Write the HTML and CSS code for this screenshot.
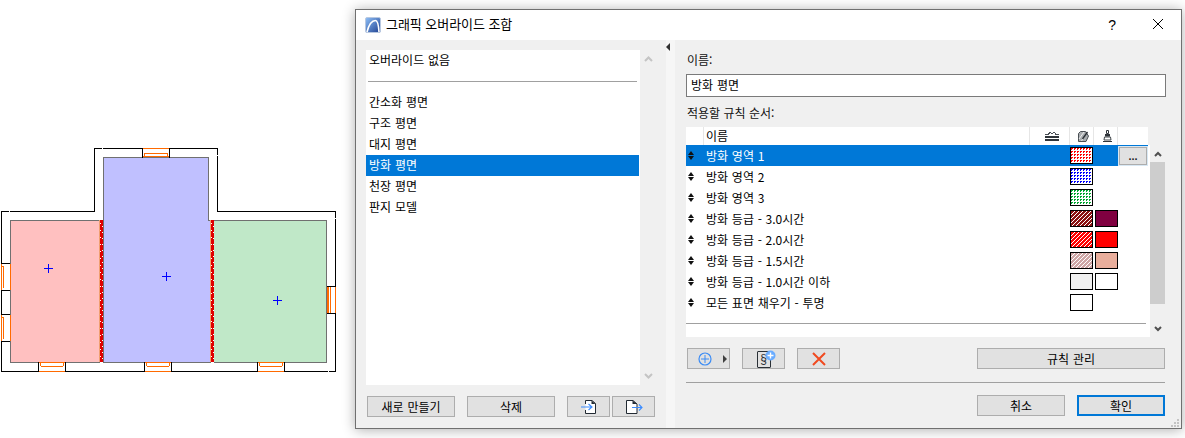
FILE: index.html
```html
<!DOCTYPE html>
<html lang="ko">
<head>
<meta charset="utf-8">
<title>그래픽 오버라이드 조합</title>
<link rel="stylesheet" href="styles.css">
</head>
<body>
<div class="page">
  <svg class="plan" width="355" height="438" viewBox="0 0 355 438" shape-rendering="crispEdges">
    <defs>
      <g id="winH">
        <path d="M0.5 0V10M27.5 0V10" stroke="#000" fill="none"/>
        <rect x="1" y="0" width="26" height="1" fill="#ff6a00"/>
        <rect x="1" y="8" width="26" height="1" fill="#ff6a00"/>
        <rect x="3" y="5" width="22" height="1" fill="#ff6a00"/>
        <rect x="2" y="5" width="1" height="3" fill="#ff6a00"/>
        <rect x="25" y="5" width="1" height="3" fill="#ff6a00"/>
      </g>
      <g id="winHb">
        <path d="M0.5 0V10M27.5 0V10" stroke="#000" fill="none"/>
        <rect x="1" y="0" width="26" height="1" fill="#ff6a00"/>
        <rect x="1" y="9" width="26" height="1" fill="#ff6a00"/>
        <rect x="3" y="4" width="22" height="1" fill="#ff6a00"/>
        <rect x="2" y="1" width="1" height="3" fill="#ff6a00"/>
        <rect x="25" y="1" width="1" height="3" fill="#ff6a00"/>
      </g>
      <g id="winV">
        <path d="M1 0.5H10M1 27.5H10" stroke="#000" fill="none"/>
        <rect x="1" y="1" width="1" height="26" fill="#ff6a00"/>
        <rect x="3" y="3" width="1" height="22" fill="#ff6a00"/>
        <rect x="1" y="3" width="2" height="1" fill="#ff6a00"/>
        <rect x="10" y="1" width="1" height="26" fill="#ff6a00"/>
      </g>
    </defs>
    <rect x="10" y="220" width="90" height="142" fill="#ffc0c0"/>
    <path d="M103.5 157.5H208.5V220.5H210V362.5H103.5Z" fill="#c0c0ff" stroke="#707070"/>
    <rect x="213" y="220" width="114" height="142" fill="#c0e8c8"/>
    <path d="M99.5 220.5H10.5V362.5H99.5" fill="none" stroke="#707070"/>
    <path d="M213.5 220.5H326.5V362.5H213.5" fill="none" stroke="#707070"/>
    <rect x="99" y="220" width="1" height="142" fill="#f0a070"/>
    <rect x="100" y="220" width="3" height="142" fill="#e00000"/>
    <path d="M100.5 223V362" stroke="#fff" stroke-dasharray="1 6" fill="none"/>
    <path d="M102.5 226V362" stroke="#fff" stroke-dasharray="1 5" fill="none"/>
    <rect x="210" y="220" width="1" height="142" fill="#f0a070"/>
    <rect x="211" y="220" width="3" height="142" fill="#e00000"/>
    <path d="M211.5 223V362" stroke="#fff" stroke-dasharray="1 6" fill="none"/>
    <path d="M213.5 226V362" stroke="#fff" stroke-dasharray="1 5" fill="none"/>
    <path d="M1.5 371.5V211.5H94.5V148.5H143M169 148.5H217.5V211.5H335.5V371.5H1.5" fill="none" stroke="#000"/>
    <path d="M9.5 211V212.5M102.5 148V149.5M217 155.5H218.5M335 218.5H336.5M328 371V372.5" stroke="#fff" fill="none"/>
    <use href="#winH" x="142" y="148"/>
    <use href="#winHb" x="38" y="362"/>
    <use href="#winHb" x="144" y="362"/>
    <use href="#winHb" x="257" y="362"/>
    <use href="#winV" x="0" y="263"/>
    <use href="#winV" x="0" y="314"/>
    <path d="M327 287H329V313H327ZM330 287H331V313H330ZM335 287H336V313H335Z" fill="#ff6a00"/>
    <path d="M327 286.5H336M327 313.5H336" stroke="#000" fill="none"/>
    <path d="M43.5 268.5H52.5M48 264V273M162 276.5H171M166.5 272V281M272.5 300.5H281.5M277.5 296V305" stroke="#0000ff" fill="none"/>
  </svg>

  <div class="window">
    <header class="titlebar">
      <svg class="app-icon" width="16" height="16" viewBox="0 0 16 16">
        <defs>
          <linearGradient id="appGrad" x1="0" y1="0" x2="1" y2="1">
            <stop offset="0" stop-color="#8fc0f8"/>
            <stop offset="1" stop-color="#1d3f8f"/>
          </linearGradient>
        </defs>
        <rect x="0.5" y="0.5" width="15" height="15" rx="1.5" fill="url(#appGrad)" stroke="#b8c8e0"/>
        <path d="M2 15C4 7 7 3.5 10.5 3.5C12.5 3.5 13.5 7 14 15" fill="none" stroke="#fff" stroke-width="1.6"/>
      </svg>
      <span class="title-text">그래픽 오버라이드 조합</span>
      <span class="help">?</span>
      <svg class="close" width="10" height="10" viewBox="0 0 10 10">
        <path d="M0 0L10 10M10 0L0 10" stroke="#000" fill="none"/>
      </svg>
    </header>

    <div class="content">
      <section class="left-pane">
        <div class="list-wrap">
          <div class="list">
            <div class="list-row">오버라이드 없음</div>
            <div class="list-sep"></div>
            <div class="list-row">간소화 평면</div>
            <div class="list-row">구조 평면</div>
            <div class="list-row">대지 평면</div>
            <div class="list-row selected">방화 평면</div>
            <div class="list-row">천장 평면</div>
            <div class="list-row">판지 모델</div>
          </div>
          <div class="list-scroll">
            <svg width="9" height="6" viewBox="0 0 9 6"><path d="M1 5L4.5 1.5L8 5" fill="none" stroke="#c4c4c4" stroke-width="2"/></svg>
            <svg width="9" height="6" viewBox="0 0 9 6"><path d="M1 1L4.5 4.5L8 1" fill="none" stroke="#c4c4c4" stroke-width="2"/></svg>
          </div>
        </div>
        <div class="left-buttons">
          <button class="btn btn-wide">새로 만들기</button>
          <button class="btn btn-wide btn-gap">삭제</button>
          <button class="btn btn-icon btn-gap">
            <svg width="18" height="16" viewBox="0 0 18 16">
              <path d="M5.5 5V1.5H12L15.5 4.5V14.5H5.5V11" fill="#fff" stroke="#222a33" stroke-width="1"/>
              <path d="M11.5 1.5V5H15.5" fill="#222a33"/>
              <path d="M1 8H12M8.5 5L12 8L8.5 11" fill="none" stroke="#3b8cff" stroke-width="1.1"/>
            </svg>
          </button>
          <button class="btn btn-icon">
            <svg width="18" height="16" viewBox="0 0 18 16">
              <path d="M1.5 1.5H8L12 5V14.5H1.5Z" fill="#fff" stroke="#222a33" stroke-width="1"/>
              <path d="M7.5 1.5V5H12" fill="#222a33"/>
              <path d="M7 8.5H17M14 5.5L17 8.5L14 11.5" fill="none" stroke="#3b8cff" stroke-width="1.1"/>
            </svg>
          </button>
        </div>
      </section>

      <div class="splitter"><span class="splitter-arrow"></span></div>

      <section class="right-pane">
        <div class="label label-name">이름:</div>
        <div class="name-input">방화 평면</div>
        <div class="label label-rules">적용할 규칙 순서:</div>

        <div class="table-wrap">
          <div class="table">
            <div class="thead">
              <span class="th"></span>
              <span class="th th-name">이름</span>
              <span class="th th-icon th-layer">
                <svg width="14" height="10" viewBox="0 0 14 10" shape-rendering="crispEdges">
                  <path d="M0 3.5H3L5 1.5L7 3L9 1L11 3.5H14" fill="none" stroke="#4a4f55"/>
                  <rect x="0" y="5" width="14" height="2" fill="#30353a"/>
                  <rect x="0" y="8" width="14" height="2" fill="#30353a"/>
                </svg>
              </span>
              <span class="th th-icon th-shift">
                <svg width="11" height="11" viewBox="0 0 11 11">
                  <path d="M0.5 2.5L2.5 0.5H7.5L10.5 5L8 10.5H0.5Z" fill="#a9adb0" stroke="#4a4f54"/>
                  <path d="M1 8L6 1M3.5 10L7.5 4" stroke="#eee" fill="none"/>
                  <path d="M9.5 1L4.5 8" stroke="#2a2f34" stroke-width="1.4" fill="none"/>
                </svg>
              </span>
              <span class="th th-icon th-shift">
                <svg width="9" height="12" viewBox="0 0 9 12">
                  <path d="M3.5 0.5H5.5V3.5H3.5Z" fill="#fff" stroke="#30353a"/>
                  <path d="M2 4H7V6.5H2Z" fill="#30353a"/>
                  <path d="M1.5 7H7.5L8 10H1Z" fill="#fff" stroke="#30353a" stroke-width="0.9"/>
                  <path d="M0 11.5H9" stroke="#30353a" stroke-width="1"/>
                </svg>
              </span>
              <span class="th"></span>
            </div>
            <div class="tr selected">
              <span class="handle"></span><span class="td-name">방화 영역 1</span><span></span>
              <span class="swatch">
                <svg class="fill-art" width="21" height="15" shape-rendering="crispEdges">
                  <pattern id="dotRed" width="3" height="3" patternUnits="userSpaceOnUse">
                    <rect width="3" height="3" fill="#fff"/>
                    <path d="M0 0h2v1h-1v1h-1z" fill="#ff0000"/>
                  </pattern>
                  <rect width="21" height="15" fill="url(#dotRed)"/>
                </svg>
              </span><span></span>
              <button class="more-btn">...</button>
            </div>
            <div class="tr">
              <span class="handle"></span><span class="td-name">방화 영역 2</span><span></span>
              <span class="swatch">
                <svg class="fill-art" width="21" height="15" shape-rendering="crispEdges">
                  <pattern id="dotBlue" width="3" height="3" patternUnits="userSpaceOnUse">
                    <rect width="3" height="3" fill="#fff"/>
                    <path d="M0 0h2v1h-1v1h-1z" fill="#0000ff"/>
                  </pattern>
                  <rect width="21" height="15" fill="url(#dotBlue)"/>
                </svg>
              </span><span></span><span></span>
            </div>
            <div class="tr">
              <span class="handle"></span><span class="td-name">방화 영역 3</span><span></span>
              <span class="swatch">
                <svg class="fill-art" width="21" height="15" shape-rendering="crispEdges">
                  <pattern id="dotGreen" width="3" height="3" patternUnits="userSpaceOnUse">
                    <rect width="3" height="3" fill="#fff"/>
                    <path d="M0 0h2v1h-1v1h-1z" fill="#00a830"/>
                  </pattern>
                  <rect width="21" height="15" fill="url(#dotGreen)"/>
                </svg>
              </span><span></span><span></span>
            </div>
            <div class="tr">
              <span class="handle"></span><span class="td-name">방화 등급 - 3.0시간</span><span></span>
              <span class="swatch">
                <svg class="fill-art" width="21" height="15" shape-rendering="crispEdges">
                  <pattern id="hatchDark" width="4" height="4" patternUnits="userSpaceOnUse">
                    <rect width="4" height="4" fill="#8a1212"/>
                    <path d="M3 0h1v1h-1zM2 1h1v1h-1zM1 2h1v1h-1zM0 3h1v1h-1z" fill="#fff"/>
                  </pattern>
                  <rect width="21" height="15" fill="url(#hatchDark)"/>
                </svg>
              </span><span class="swatch swatch-b solid-wine"></span><span></span>
            </div>
            <div class="tr">
              <span class="handle"></span><span class="td-name">방화 등급 - 2.0시간</span><span></span>
              <span class="swatch">
                <svg class="fill-art" width="21" height="15" shape-rendering="crispEdges">
                  <pattern id="hatchRed" width="4" height="4" patternUnits="userSpaceOnUse">
                    <rect width="4" height="4" fill="#ff0000"/>
                    <path d="M3 0h1v1h-1zM2 1h1v1h-1zM1 2h1v1h-1zM0 3h1v1h-1z" fill="#fff"/>
                  </pattern>
                  <rect width="21" height="15" fill="url(#hatchRed)"/>
                </svg>
              </span><span class="swatch swatch-b solid-red"></span><span></span>
            </div>
            <div class="tr">
              <span class="handle"></span><span class="td-name">방화 등급 - 1.5시간</span><span></span>
              <span class="swatch">
                <svg class="fill-art" width="21" height="15" shape-rendering="crispEdges">
                  <pattern id="hatchPink" width="4" height="4" patternUnits="userSpaceOnUse">
                    <rect width="4" height="4" fill="#cfa6a6"/>
                    <path d="M3 0h1v1h-1zM2 1h1v1h-1zM1 2h1v1h-1zM0 3h1v1h-1z" fill="#fff"/>
                  </pattern>
                  <rect width="21" height="15" fill="url(#hatchPink)"/>
                </svg>
              </span><span class="swatch swatch-b solid-salmon"></span><span></span>
            </div>
            <div class="tr">
              <span class="handle"></span><span class="td-name">방화 등급 - 1.0시간 이하</span><span></span>
              <span class="swatch solid-light"></span><span class="swatch swatch-b solid-white"></span><span></span>
            </div>
            <div class="tr">
              <span class="handle"></span><span class="td-name">모든 표면 채우기 - 투명</span><span></span>
              <span class="swatch solid-white"></span><span></span><span></span>
            </div>
            <div class="table-sep"></div>
          </div>
          <div class="vscroll">
            <div class="vscroll-top">
              <svg width="8" height="6" viewBox="0 0 8 6"><path d="M1 5L4 2L7 5" fill="none" stroke="#505050" stroke-width="2"/></svg>
            </div>
            <div class="vscroll-thumb"></div>
            <div class="vscroll-bottom">
              <svg width="8" height="6" viewBox="0 0 8 6"><path d="M1 1L4 4L7 1" fill="none" stroke="#505050" stroke-width="2"/></svg>
            </div>
          </div>
        </div>

        <div class="action-row">
          <button class="btn btn-icon btn-plus">
            <svg width="14" height="14" viewBox="0 0 14 14">
              <circle cx="7" cy="7" r="6" fill="none" stroke="#3b8cf5" stroke-width="1.2"/>
              <path d="M7 3V11M3 7H11" stroke="#3b8cf5" fill="none"/>
            </svg>
            <span class="tri-right"></span>
          </button>
          <button class="btn btn-icon btn-gap-s">
            <span class="doc-icon">§
              <svg class="doc-plus" width="11" height="11" viewBox="0 0 11 11">
                <circle cx="5.5" cy="5.5" r="5" fill="#6aacff"/>
                <path d="M5.5 2.5V8.5M2.5 5.5H8.5" stroke="#fff" stroke-width="1.4" fill="none"/>
              </svg>
            </span>
          </button>
          <button class="btn btn-icon btn-gap-s">
            <svg width="14" height="14" viewBox="0 0 14 14">
              <path d="M1 1L13 13M13 1L1 13" stroke="#f04a20" stroke-width="2" fill="none"/>
            </svg>
          </button>
          <button class="btn btn-manage">규칙 관리</button>
        </div>

        <div class="pane-sep"></div>

        <div class="footer-row">
          <button class="btn btn-wide">취소</button>
          <button class="btn btn-wide btn-primary">확인</button>
        </div>
      </section>
    </div>

    <svg class="grip" width="8" height="8" viewBox="0 0 8 8" shape-rendering="crispEdges">
      <path d="M6 0h2v2h-2zM3 3h2v2h-2zM6 3h2v2h-2zM0 6h2v2h-2zM3 6h2v2h-2zM6 6h2v2h-2z" fill="#c4c4c4"/>
    </svg>
  </div>
</div>
</body>
</html>
```

FILE: styles.css
```css
* { box-sizing: border-box; }

html, body {
  margin: 0;
  padding: 0;
  background: #fff;
}

body {
  font-family: "Noto Sans CJK KR", "Noto Sans", sans-serif;
  font-size: 12px;
  color: #000;
  overflow: hidden;
}

.page {
  display: flex;
  align-items: flex-start;
  width: 1185px;
  height: 438px;
  overflow: hidden;
}

.plan {
  display: block;
  flex: none;
}

/* dialog window */
.window {
  position: relative;
  flex: none;
  display: flex;
  flex-direction: column;
  width: 827px;
  height: 420px;
  margin-top: 9px;
  border: 1px solid #707070;
  background: #f0f0f0;
  box-shadow: 0 1px 12px rgba(0, 0, 0, 0.32);
}

.titlebar {
  flex: none;
  display: flex;
  align-items: center;
  height: 30px;
  padding-left: 9px;
  background: #fff;
}

.app-icon { flex: none; }

.title-text {
  margin-left: 5px;
  margin-bottom: 2px;
  font-size: 13px;
  line-height: 18px;
  letter-spacing: -0.05px;
}

.help {
  margin-left: auto;
  margin-bottom: 1px;
  font-size: 14px;
  font-family: "Liberation Sans", sans-serif;
}

.close {
  margin-left: 37px;
  margin-right: 18px;
  margin-bottom: 2px;
}

.content {
  flex: 1;
  display: flex;
  min-height: 0;
}

/* left pane */
.left-pane {
  flex: none;
  width: 310px;
  padding: 10px 0 0 10px;
}

.list-wrap {
  display: flex;
  height: 335px;
}

.list {
  width: 274px;
  background: #fff;
}

.list-row {
  height: 21px;
  padding-left: 3px;
  line-height: 20px;
  white-space: nowrap;
  word-spacing: 0.5px;
}

.list-row.selected {
  width: 273px;
  background: #0078d7;
  color: #fff;
}

.list-sep {
  height: 1px;
  margin: 10px 3px 10px 2px;
  background: #a0a0a0;
}

.list-scroll {
  display: flex;
  flex-direction: column;
  justify-content: space-between;
  align-items: center;
  width: 16px;
  padding: 6px 0 6px 0;
}

.list-scroll svg { display: block; }

.left-buttons {
  display: flex;
  margin-top: 11px;
  padding-left: 1px;
}

/* buttons */
.btn {
  display: inline-flex;
  align-items: center;
  justify-content: center;
  height: 21px;
  margin: 0;
  padding: 0;
  border: 1px solid #adadad;
  background: #e1e1e1;
  color: #000;
  font: inherit;
  line-height: 18px;
  word-spacing: 0.5px;
}

.btn-wide { width: 88px; }
.btn-gap { margin-left: 12px; }
.btn-icon { width: 43px; }
.left-buttons .btn-icon + .btn-icon { margin-left: 2px; }
.btn-gap-s { margin-left: 12px; }

.btn-primary {
  margin-left: 12px;
  border: 2px solid #0078d7;
}

.btn-plus {
  justify-content: flex-start;
  padding-left: 10px;
}

.tri-right {
  width: 0;
  height: 0;
  margin-left: 11px;
  border-left: 4px solid #404040;
  border-top: 4px solid transparent;
  border-bottom: 4px solid transparent;
}

.doc-icon {
  position: relative;
  display: block;
  width: 14px;
  height: 17px;
  margin-top: 2px;
  border: 1px solid #2a3036;
  border-radius: 1px;
  font-family: "Liberation Sans", sans-serif;
  font-size: 12px;
  line-height: 15px;
  text-align: center;
  color: #2a3036;
}

.doc-plus {
  position: absolute;
  top: -2px;
  right: -6px;
}

/* splitter */
.splitter {
  flex: none;
  width: 9px;
  background: #f6f6f6;
  padding-top: 3px;
}

.splitter-arrow {
  display: block;
  width: 0;
  height: 0;
  margin-left: 0;
  border-right: 4px solid #303030;
  border-top: 4px solid transparent;
  border-bottom: 4px solid transparent;
}

/* right pane */
.right-pane {
  flex: 1;
  min-width: 0;
  padding: 0 15px 0 11px;
}

.label {
  height: 18px;
  line-height: 18px;
  padding-left: 1px;
  color: #101010;
}

.label-name { margin-top: 11px; }

.name-input {
  height: 23px;
  margin-top: 5px;
  padding-left: 4px;
  border: 1px solid #7a7a7a;
  background: #fff;
  line-height: 20px;
  word-spacing: 0.5px;
}

.label-rules { margin-top: 7px; }

.table-wrap {
  display: flex;
  height: 210px;
  margin-top: 5px;
}

.table {
  width: 464px;
  padding-right: 2px;
  background: #fff;
}

.thead,
.tr {
  display: grid;
  grid-template-columns: 17px 326px 40px 24px 24px 31px;
}

.thead {
  height: 18px;
  box-shadow: 2px 0 0 #f0f0f0;
}

.th {
  display: flex;
  align-items: center;
  border-left: 1px solid #e6e6e6;
  padding-left: 2px;
  line-height: 16px;
}

.th:first-child { border-left: 0; }
.th-icon { justify-content: center; padding: 0; }
.th-layer { padding-left: 5px; }
.th-shift { padding-left: 4px; }

.tr {
  height: 21px;
  align-items: center;
}

.tr.selected {
  background: #0078d7;
  color: #fff;
}

.handle {
  position: relative;
  display: block;
  height: 21px;
}

.handle::before,
.handle::after {
  content: "";
  position: absolute;
  left: 2px;
  width: 0;
  height: 0;
  border-left: 3px solid transparent;
  border-right: 3px solid transparent;
}

.handle::before {
  top: 6px;
  border-bottom: 4px solid #111;
}

.handle::after {
  top: 11px;
  border-top: 4px solid #111;
}

.td-name {
  padding-left: 3px;
  line-height: 20px;
  white-space: nowrap;
  word-spacing: 0.4px;
}

.swatch {
  display: block;
  width: 23px;
  height: 17px;
  border: 1px solid #000;
  justify-self: end;
}

.swatch-b {
  justify-self: end;
  margin-right: -1px;
}

.fill-art { display: block; }

.solid-wine { background: #800040; }
.solid-red { background: #ff0000; }
.solid-salmon { background: #e9ae9c; }
.solid-light { background: #f0f0f0; }
.solid-white { background: #fff; }

.more-btn {
  justify-self: start;
  display: block;
  width: 28px;
  height: 18px;
  margin: 0 0 0 2px;
  padding: 0;
  border: 1px solid #adadad;
  outline: 1px solid #d8e8f4;
  outline-offset: 0;
  background: #e1e1e1;
  color: #222;
  font: bold 11px/12px "Liberation Sans", sans-serif;
}

.table-sep {
  height: 1px;
  margin: 10px 2px 0 0;
  background: #a0a0a0;
}

/* table scrollbar */
.vscroll {
  display: flex;
  flex-direction: column;
  width: 15px;
}

.vscroll-top {
  display: flex;
  justify-content: center;
  height: 35px;
  padding-top: 24px;
}

.vscroll-thumb {
  height: 142px;
  background: #cdcdcd;
}

.vscroll-bottom {
  display: flex;
  justify-content: center;
  padding-top: 22px;
}

.vscroll svg { display: block; }

/* action rows */
.action-row {
  display: flex;
  margin-top: 11px;
  padding-left: 1px;
}

.btn-manage {
  width: 188px;
  margin-left: auto;
  margin-right: 1px;
}

.pane-sep {
  height: 1px;
  margin-top: 13px;
  margin-right: 1px;
  background: #a0a0a0;
}

.footer-row {
  display: flex;
  justify-content: flex-end;
  margin-top: 12px;
  padding-right: 1px;
}

.grip {
  position: absolute;
  right: 2px;
  bottom: 1px;
}
```
